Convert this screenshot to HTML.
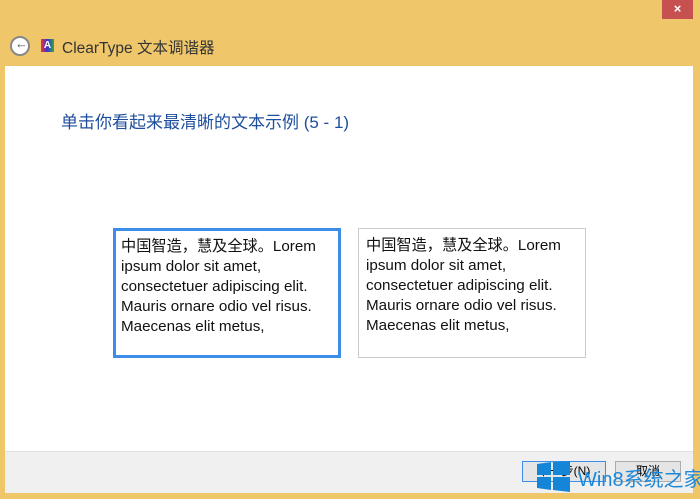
<!DOCTYPE html>
<html><head><meta charset="utf-8"><style>
html,body{margin:0;width:700px;height:499px;overflow:hidden}
body{background:#EFC76A;position:relative;font-family:"Liberation Sans","Noto Sans CJK SC",sans-serif}
.close{position:absolute;left:662px;top:0;width:31px;height:19px;background:#C75050;color:#fff;font-size:13px;text-align:center;line-height:18px;font-weight:bold}
.title{position:absolute;left:62px;top:36px;font-size:15.5px;color:#333}
.back{position:absolute;left:10px;top:36px;width:20px;height:20px;border-radius:50%;border:2px solid #888;background:#fff;box-sizing:border-box}
.ic{position:absolute;left:41px;top:39px;width:13px;height:13px;background:linear-gradient(90deg,#e33,#33d,#3a3);color:#fff;font-size:10px;text-align:center;line-height:13px;font-weight:bold}
.main{position:absolute;left:5px;top:66px;width:688px;height:385px;background:#fff}
.foot{position:absolute;left:5px;top:451px;width:688px;height:41px;background:#F0F0F0;border-top:1px solid #e0e0e0}
.h{position:absolute;left:61px;top:108px;font-size:17px;color:#1E4E9E}
.box{position:absolute;top:228px;width:228px;height:130px;box-sizing:border-box;padding:7px 0 0 7px;font-size:15.2px;line-height:20px;color:#111}
.b1{left:113px;border:3px solid #3C8EE8;padding:6px 0 0 5px}
.b2{left:358px;border:1px solid #ccc}
.btn{position:absolute;top:461px;height:21px;box-sizing:border-box;font-size:12px;text-align:center;line-height:19px;background:#e5e5e5;border:1px solid #acacac}
</style></head><body>
<div class="close">×</div>
<div class="back"><span style="position:absolute;left:3px;top:-2px;font-size:13px;color:#555;font-weight:bold">←</span></div>
<div class="ic">A</div>
<div class="title">ClearType 文本调谐器</div>
<div class="main"></div>
<div class="foot"></div>
<div class="h">单击你看起来最清晰的文本示例 (5 - 1)</div>
<div class="box b1">中国智造，慧及全球。Lorem<br>ipsum dolor sit amet,<br>consectetuer adipiscing elit.<br>Mauris ornare odio vel risus.<br>Maecenas elit metus,</div>
<div class="box b2">中国智造，慧及全球。Lorem<br>ipsum dolor sit amet,<br>consectetuer adipiscing elit.<br>Mauris ornare odio vel risus.<br>Maecenas elit metus,</div>
<div class="btn" style="left:522px;width:84px;border-color:#3C8EE8">下一步(N)</div>
<div class="btn" style="left:615px;width:66px">取消</div>
<svg style="position:absolute;left:537px;top:461px" width="33" height="31"><path d="M0 3L14 1V14H0ZM16 1L33 0V14H16ZM0 16H14V29L0 27ZM16 16H33V31L16 29Z" fill="#1585D8"/></svg>
<div style="position:absolute;left:578px;top:463px;font-size:20px;color:#1E88D8;white-space:nowrap">Win8系统之家</div>
</body></html>
